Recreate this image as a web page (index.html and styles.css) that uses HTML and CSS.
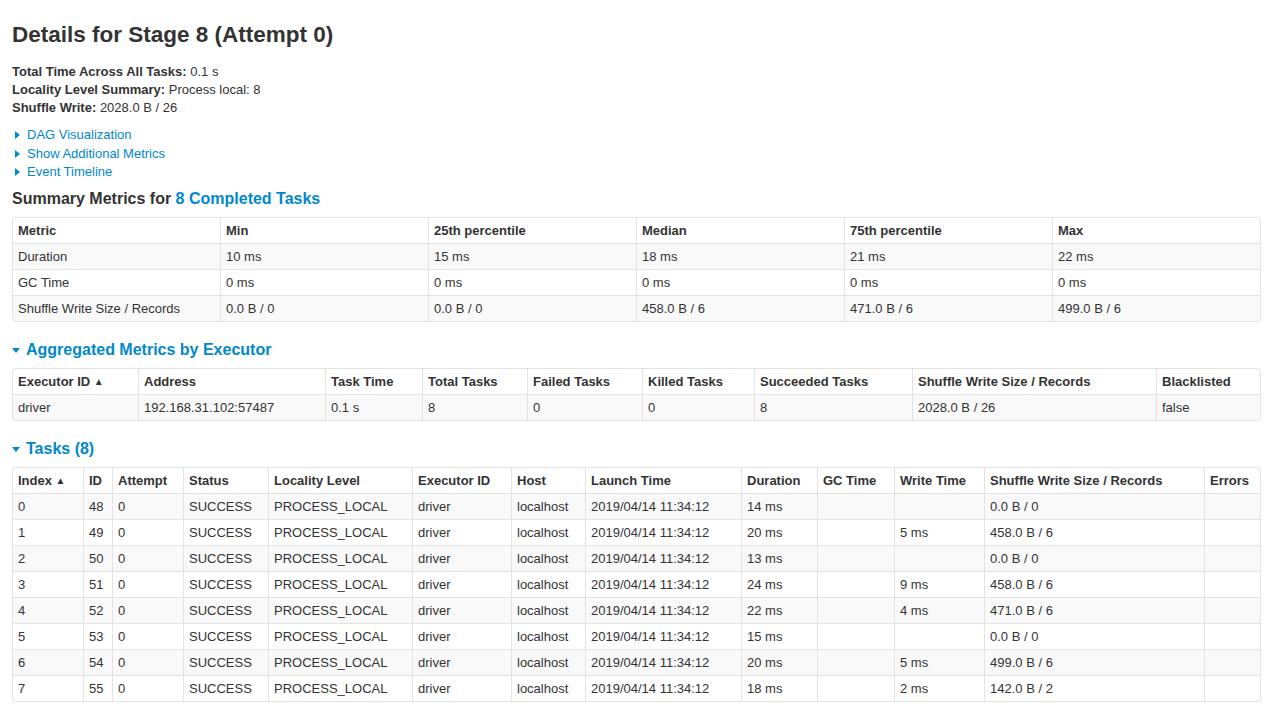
FILE: index.html
```html
<!DOCTYPE html>
<html>
<head>
<meta charset="utf-8">
<link rel="stylesheet" href="styles.css">
</head>
<body>
<div class="page">
  <h3 class="title">Details for Stage 8 (Attempt 0)</h3>
  <ul class="info">
    <li><strong>Total Time Across All Tasks:</strong> 0.1 s</li>
    <li><strong>Locality Level Summary:</strong> Process local: 8</li>
    <li><strong>Shuffle Write:</strong> 2028.0 B / 26</li>
  </ul>
  <ul class="toggles">
    <li><span class="arrow-right"></span><a href="#">DAG Visualization</a></li>
    <li><span class="arrow-right"></span><a href="#">Show Additional Metrics</a></li>
    <li><span class="arrow-right"></span><a href="#">Event Timeline</a></li>
  </ul>

  <h4 class="section">Summary Metrics for <a href="#">8 Completed Tasks</a></h4>
  <table class="grid summary">
    <thead>
      <tr><th>Metric</th><th>Min</th><th>25th percentile</th><th>Median</th><th>75th percentile</th><th>Max</th></tr>
    </thead>
    <tbody>
      <tr><td>Duration</td><td>10 ms</td><td>15 ms</td><td>18 ms</td><td>21 ms</td><td>22 ms</td></tr>
      <tr><td>GC Time</td><td>0 ms</td><td>0 ms</td><td>0 ms</td><td>0 ms</td><td>0 ms</td></tr>
      <tr><td>Shuffle Write Size / Records</td><td>0.0 B / 0</td><td>0.0 B / 0</td><td>458.0 B / 6</td><td>471.0 B / 6</td><td>499.0 B / 6</td></tr>
    </tbody>
  </table>

  <h4 class="section link-head"><span class="arrow-down"></span><a href="#">Aggregated Metrics by Executor</a></h4>
  <table class="grid executors">
    <colgroup>
      <col style="width:126px"><col style="width:187px"><col style="width:97px"><col style="width:105px"><col style="width:115px"><col style="width:112px"><col style="width:158px"><col style="width:244px"><col>
    </colgroup>
    <thead>
      <tr><th>Executor ID <span class="sort">&#9650;</span></th><th>Address</th><th>Task Time</th><th>Total Tasks</th><th>Failed Tasks</th><th>Killed Tasks</th><th>Succeeded Tasks</th><th>Shuffle Write Size / Records</th><th>Blacklisted</th></tr>
    </thead>
    <tbody>
      <tr><td>driver</td><td>192.168.31.102:57487</td><td>0.1 s</td><td>8</td><td>0</td><td>0</td><td>8</td><td>2028.0 B / 26</td><td>false</td></tr>
    </tbody>
  </table>

  <h4 class="section link-head"><span class="arrow-down"></span><a href="#">Tasks (8)</a></h4>
  <table class="grid tasks">
    <colgroup>
      <col style="width:71px"><col style="width:29px"><col style="width:71px"><col style="width:85px"><col style="width:144px"><col style="width:99px"><col style="width:74px"><col style="width:156px"><col style="width:76px"><col style="width:77px"><col style="width:90px"><col style="width:220px"><col>
    </colgroup>
    <thead>
      <tr><th>Index <span class="sort">&#9650;</span></th><th>ID</th><th>Attempt</th><th>Status</th><th>Locality Level</th><th>Executor ID</th><th>Host</th><th>Launch Time</th><th>Duration</th><th>GC Time</th><th>Write Time</th><th>Shuffle Write Size / Records</th><th>Errors</th></tr>
    </thead>
    <tbody>
      <tr><td>0</td><td>48</td><td>0</td><td>SUCCESS</td><td>PROCESS_LOCAL</td><td>driver</td><td>localhost</td><td>2019/04/14 11:34:12</td><td>14 ms</td><td></td><td></td><td>0.0 B / 0</td><td></td></tr>
      <tr><td>1</td><td>49</td><td>0</td><td>SUCCESS</td><td>PROCESS_LOCAL</td><td>driver</td><td>localhost</td><td>2019/04/14 11:34:12</td><td>20 ms</td><td></td><td>5 ms</td><td>458.0 B / 6</td><td></td></tr>
      <tr><td>2</td><td>50</td><td>0</td><td>SUCCESS</td><td>PROCESS_LOCAL</td><td>driver</td><td>localhost</td><td>2019/04/14 11:34:12</td><td>13 ms</td><td></td><td></td><td>0.0 B / 0</td><td></td></tr>
      <tr><td>3</td><td>51</td><td>0</td><td>SUCCESS</td><td>PROCESS_LOCAL</td><td>driver</td><td>localhost</td><td>2019/04/14 11:34:12</td><td>24 ms</td><td></td><td>9 ms</td><td>458.0 B / 6</td><td></td></tr>
      <tr><td>4</td><td>52</td><td>0</td><td>SUCCESS</td><td>PROCESS_LOCAL</td><td>driver</td><td>localhost</td><td>2019/04/14 11:34:12</td><td>22 ms</td><td></td><td>4 ms</td><td>471.0 B / 6</td><td></td></tr>
      <tr><td>5</td><td>53</td><td>0</td><td>SUCCESS</td><td>PROCESS_LOCAL</td><td>driver</td><td>localhost</td><td>2019/04/14 11:34:12</td><td>15 ms</td><td></td><td></td><td>0.0 B / 0</td><td></td></tr>
      <tr><td>6</td><td>54</td><td>0</td><td>SUCCESS</td><td>PROCESS_LOCAL</td><td>driver</td><td>localhost</td><td>2019/04/14 11:34:12</td><td>20 ms</td><td></td><td>5 ms</td><td>499.0 B / 6</td><td></td></tr>
      <tr><td>7</td><td>55</td><td>0</td><td>SUCCESS</td><td>PROCESS_LOCAL</td><td>driver</td><td>localhost</td><td>2019/04/14 11:34:12</td><td>18 ms</td><td></td><td>2 ms</td><td>142.0 B / 2</td><td></td></tr>
    </tbody>
  </table>
</div>
</body>
</html>
```
FILE: styles.css
```css
html, body {
  margin: 0;
  padding: 0;
  background: #fff;
}
body {
  font-family: "Liberation Sans", Arial, sans-serif;
  font-size: 13px;
  color: #333;
}
a {
  color: #0088cc;
  text-decoration: none;
}
.page {
  width: 1249px;
  padding: 20px 12px 18px 12px;
}
.title {
  margin: 0;
  font-size: 22.5px;
  line-height: 30px;
  font-weight: bold;
}
.info {
  list-style: none;
  margin: 13px 0 0 0;
  padding: 0;
}
.info li {
  line-height: 18px;
}
.toggles {
  list-style: none;
  margin: 9px 0 0 0;
  padding: 0;
}
.toggles li {
  line-height: 18.5px;
  display: flex;
  align-items: center;
}
.arrow-right {
  display: inline-block;
  width: 0;
  height: 0;
  border-top: 4px solid transparent;
  border-bottom: 4px solid transparent;
  border-left: 5px solid #0088cc;
  margin: 0 7px 0 3px;
}
.arrow-down {
  display: inline-block;
  width: 0;
  height: 0;
  border-left: 4px solid transparent;
  border-right: 4px solid transparent;
  border-top: 5px solid #0088cc;
  margin: 1px 6px 0 0;
}
.section {
  margin: 7.5px 0 8px 0;
  font-size: 16px;
  line-height: 20px;
  height: 20px;
  font-weight: bold;
}
.link-head {
  display: flex;
  align-items: center;
  margin-top: 18px;
}
.grid {
  width: 100%;
  border-collapse: separate;
  border-spacing: 0;
  border: 1px solid #e3e3e3;
  border-left: 0;
  border-radius: 4px;
  table-layout: fixed;
}
.grid th, .grid td {
  text-align: left;
  padding: 4px 5px;
  line-height: 17px;
  border-left: 1px solid #e3e3e3;
  border-top: 1px solid #e3e3e3;
  vertical-align: top;
  white-space: nowrap;
  overflow: hidden;
}
.grid thead th {
  border-top: 0;
  font-weight: bold;
}
.grid tbody tr:nth-child(odd) td {
  background: #f9f9f9;
}
.grid thead tr th:first-child {
  border-top-left-radius: 4px;
}
.grid tbody tr:last-child td:first-child {
  border-bottom-left-radius: 4px;
}
.sort {
  font-size: 10px;
  vertical-align: 1px;
}
```
